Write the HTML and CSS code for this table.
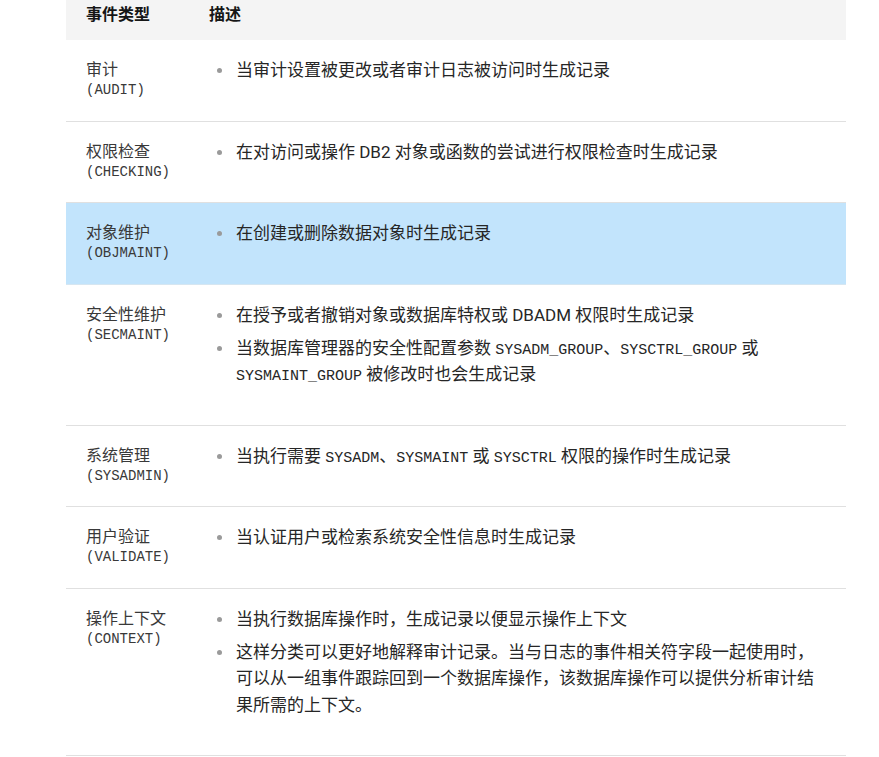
FILE: index.html
```html
<!DOCTYPE html>
<html lang="zh-CN">
<head>
<meta charset="utf-8">
<title>审计事件类型</title>
<link rel="stylesheet" href="styles.css">
</head>
<body>
<div class="page">
  <div class="table">
    <div class="row head">
      <div class="cell type">事件类型</div>
      <div class="cell desc">描述</div>
    </div>
    <div class="row">
      <div class="cell type">审计<code>(AUDIT)</code></div>
      <div class="cell desc"><ul><li>当审计设置被更改或者审计日志被访问时生成记录</li></ul></div>
    </div>
    <div class="row">
      <div class="cell type">权限检查<code>(CHECKING)</code></div>
      <div class="cell desc"><ul><li>在对访问或操作 DB2 对象或函数的尝试进行权限检查时生成记录</li></ul></div>
    </div>
    <div class="row selected">
      <div class="cell type">对象维护<code>(OBJMAINT)</code></div>
      <div class="cell desc"><ul><li>在创建或删除数据对象时生成记录</li></ul></div>
    </div>
    <div class="row">
      <div class="cell type">安全性维护<code>(SECMAINT)</code></div>
      <div class="cell desc"><ul>
        <li>在授予或者撤销对象或数据库特权或 DBADM 权限时生成记录</li>
        <li>当数据库管理器的安全性配置参数 <code>SYSADM_GROUP</code>、<code>SYSCTRL_GROUP</code> 或 <code>SYSMAINT_GROUP</code> 被修改时也会生成记录</li>
      </ul></div>
    </div>
    <div class="row">
      <div class="cell type">系统管理<code>(SYSADMIN)</code></div>
      <div class="cell desc"><ul><li>当执行需要 <code>SYSADM</code>、<code>SYSMAINT</code> 或 <code>SYSCTRL</code> 权限的操作时生成记录</li></ul></div>
    </div>
    <div class="row">
      <div class="cell type">用户验证<code>(VALIDATE)</code></div>
      <div class="cell desc"><ul><li>当认证用户或检索系统安全性信息时生成记录</li></ul></div>
    </div>
    <div class="row">
      <div class="cell type">操作上下文<code>(CONTEXT)</code></div>
      <div class="cell desc"><ul>
        <li>当执行数据库操作时，生成记录以便显示操作上下文</li>
        <li>这样分类可以更好地解释审计记录。当与日志的事件相关符字段一起使用时，可以从一组事件跟踪回到一个数据库操作，该数据库操作可以提供分析审计结果所需的上下文。</li>
      </ul></div>
    </div>
  </div>
</div>
</body>
</html>
```
FILE: styles.css
```css
html, body {
  margin: 0;
  padding: 0;
  background: #ffffff;
}

body {
  font-family: Roboto, "Noto Sans CJK SC", sans-serif;
  color: #262626;
}

.page {
  padding-left: 66px;
}

.table {
  width: 780px;
}

.row {
  display: grid;
  grid-template-columns: 143px 1fr;
  border-bottom: 1px solid #e0e0e0;
}

.row.selected {
  background: #c2e4fc;
  border-bottom-color: #d6e6f1;
}

.row.head {
  background: #f4f4f4;
  height: 40px;
  border-bottom: none;
}

.cell.type {
  padding: 20px 0 20px 20px;
  font-size: 16px;
  line-height: 20px;
  color: #393939;
}

.cell.type code {
  display: block;
  font-family: "Liberation Mono", "DejaVu Sans Mono", monospace;
  font-size: 14px;
  line-height: 20px;
  color: #393939;
}

.cell.desc {
  padding: 17px 22px 37px 0;
  font-size: 17px;
  line-height: 26.5px;
}

.head .cell.type,
.head .cell.desc {
  padding: 4px 0 0 0;
  font-size: 16px;
  line-height: 21px;
  font-weight: 700;
  color: #161616;
}

.head .cell.type {
  padding-left: 20px;
}

.desc ul {
  margin: 0;
  padding: 0;
  list-style: none;
}

.desc li {
  position: relative;
  padding-left: 27px;
}

.desc li + li {
  margin-top: 6.5px;
}

.desc li::before {
  content: "";
  position: absolute;
  left: 8px;
  top: 11px;
  width: 5px;
  height: 5px;
  border-radius: 50%;
  background: #9a9a9a;
}

.desc code {
  font-family: "Liberation Mono", "DejaVu Sans Mono", monospace;
  font-size: 15px;
  line-height: 1;
  color: #262626;
}
```
